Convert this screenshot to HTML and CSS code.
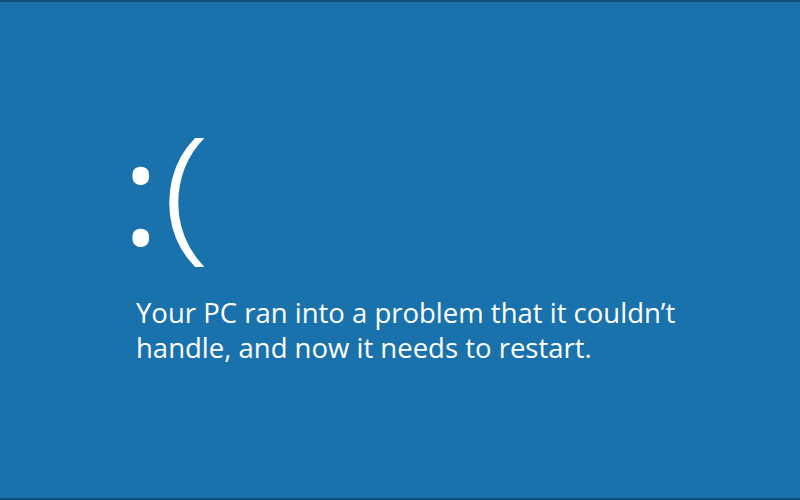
FILE: index.html
```html
<!DOCTYPE html>
<html>
<head>
<meta charset="utf-8">
<link rel="stylesheet" href="styles.css">
</head>
<body>
<div class="screen">
  <div class="content">
    <div class="face"><span class="colon">:</span><span class="paren">(</span></div>
    <p class="msg">Your PC ran into a problem that it couldn’t<br>handle, and now it needs to restart.</p>
  </div>
</div>
</body>
</html>
```
FILE: styles.css
```css
html, body {
  margin: 0;
  padding: 0;
  width: 800px;
  height: 500px;
  overflow: hidden;
}
.screen {
  box-sizing: border-box;
  width: 800px;
  height: 500px;
  background: #1a72ac;
  border-top: 2px solid #114f7a;
  border-bottom: 2px solid #114f7a;
  font-family: "Open Sans", "Noto Sans", sans-serif;
  color: #ffffff;
}
.content {
  padding: 78px 0 0 122px;
}
.face {
  display: flex;
  align-items: flex-start;
  height: 200px;
}
.colon {
  font-size: 143px;
  font-weight: 400;
  line-height: 1;
  margin-top: 38px;
}
.paren {
  font-size: 148px;
  font-weight: 300;
  line-height: 1;
  margin-top: 33px;
  margin-left: 2px;
  transform: scaleX(1.2);
  transform-origin: left center;
}
.msg {
  margin: 15px 0 0 14px;
  font-size: 27.5px;
  font-weight: 400;
  line-height: 35px;
}
```
